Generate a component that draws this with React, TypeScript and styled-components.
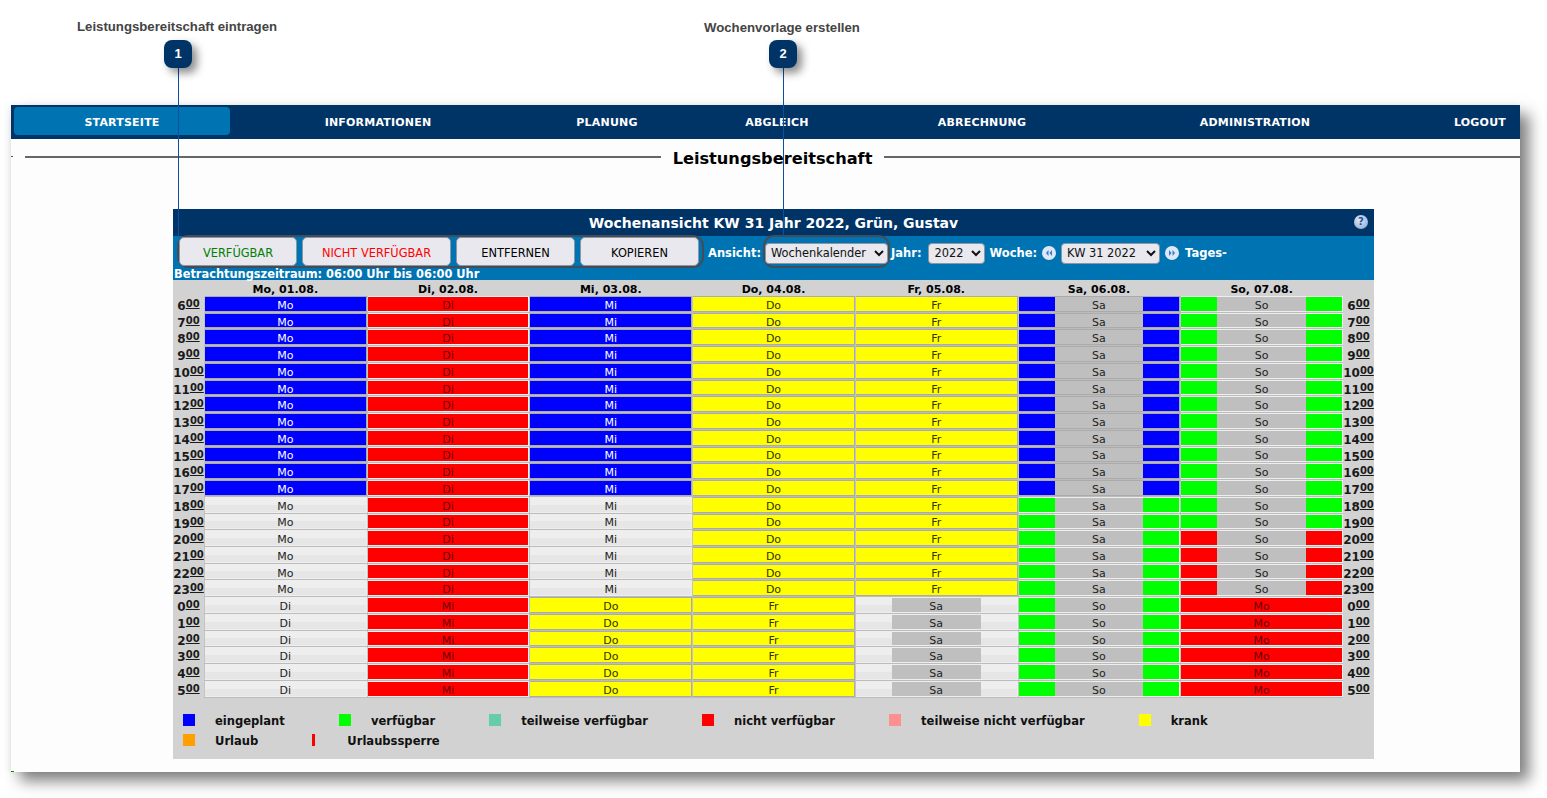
import React from "react";
import styled, { createGlobalStyle } from "styled-components";

const Global = createGlobalStyle`
  html, body { margin: 0; padding: 0; background: #fff; }
  body { font-family: "DejaVu Sans", Verdana, sans-serif; font-size: 11px; color: #000; }
`;

const NAVY = "#003366";
const BLUE = "#0074b3";

const Page = styled.div`
  position: relative;
  width: 1547px;
  height: 798px;
  padding: 105px 0 0 11px;
  box-sizing: border-box;
  overflow: hidden;
`;

const Win = styled.div`
  position: relative;
  width: 1509px;
  height: 667px;
  background: #fdfdfd;
  box-shadow: 9px 9px 14px rgba(0, 0, 0, 0.5), -2px 0 6px rgba(0, 0, 0, 0.06);
`;

const Nav = styled.nav`
  display: flex;
  height: 34px;
  background: ${NAVY};
  padding: 2px 0 2px 3px;
  box-sizing: border-box;
`;

const NavItem = styled.a<{ $w: number; $active?: boolean; $pad?: number }>`
  flex: 0 0 ${(p) => p.$w}px;
  display: flex;
  align-items: center;
  justify-content: center;
  padding: 2px 0 0 ${(p) => p.$pad ?? 0}px;
  box-sizing: border-box;
  margin-bottom: 2px;
  border-radius: 4px;
  background: ${(p) => (p.$active ? BLUE : "transparent")};
  color: #fff;
  font-weight: 700;
  font-size: 11px;
  letter-spacing: 0.2px;
`;

const TitleRow = styled.div`
  display: flex;
  align-items: center;
  height: 38px;
  padding-left: 14px;
`;

const Rule = styled.span`
  flex: 1;
  height: 2px;
  margin-bottom: 2px;
  background: #666;
`;

const PageTitle = styled.h1`
  margin: 0 12px;
  padding-top: 2px;
  font-size: 16.2px;
  font-weight: 700;
  line-height: 34px;
  white-space: nowrap;
`;

const Panel = styled.section`
  width: 1201px;
  height: 550px;
  margin: 32px 0 0 162px;
  background: #d2d2d2;
`;

const PanelHead = styled.header`
  position: relative;
  height: 27px;
  display: flex;
  align-items: center;
  justify-content: center;
  background: ${NAVY};
  color: #fff;
  font-size: 14px;
  font-weight: 700;
`;

const Help = styled.span`
  position: absolute;
  right: 6px;
  top: 6px;
  width: 14px;
  height: 14px;
  border-radius: 50%;
  background: radial-gradient(circle at 40% 35%, #dfe9f7, #7fa3d6);
  color: #2c4f8c;
  font-size: 10px;
  font-weight: 700;
  line-height: 14px;
  text-align: center;
`;

const Toolbar = styled.div`
  height: 45px;
  background: ${BLUE};
  color: #fff;
  box-sizing: border-box;
`;

const ToolRow = styled.div`
  display: flex;
  align-items: center;
  height: 33px;
  margin-top: -1px;
  padding-left: 4px;
  position: relative;
`;

const BtnGroup = styled.div`
  display: flex;
  gap: 5px;
  height: 33px;
  box-sizing: border-box;
  padding: 0 3px 0 0;
  border: 2px solid #444c58;
  border-radius: 11px;
  align-items: stretch;
`;

const Btn = styled.button<{ $w: number; $color: string }>`
  width: ${(p) => p.$w}px;
  padding: 2px 0 0;
  margin: 0;
  border: 1px solid #8c96a3;
  border-radius: 5px;
  background: #e8e8ee;
  color: ${(p) => p.$color};
  font: 400 11.4px "DejaVu Sans", Verdana, sans-serif;
`;

const Label = styled.span<{ $ml: number }>`
  margin: 3px 0 0 ${(p) => p.$ml}px;
  font-weight: 700;
  font-size: 11.5px;
  white-space: nowrap;
`;

const Ring = styled.div`
  display: flex;
  align-items: center;
  margin-left: 2px;
  height: 33px;
  box-sizing: border-box;
  padding: 3px 0 0;
  border: 2px solid #444c58;
  border-radius: 11px;
`;

const Select = styled.select<{ $w: number; $ml?: number; $mt?: number }>`
  width: ${(p) => p.$w}px;
  height: 21px;
  margin: ${(p) => p.$mt ?? 0}px 0 0 ${(p) => p.$ml ?? 0}px;
  padding: 0 0 0 1px;
  box-sizing: border-box;
  border: 1px solid #8c96a3;
  border-radius: 4px;
  background-color: #e8e8ee;
  color: #111;
  font: 400 11.4px "DejaVu Sans", Verdana, sans-serif;
`;

const Round = styled.span<{ $ml: number }>`
  display: inline-flex;
  margin: 3px 0 0 ${(p) => p.$ml}px;
  width: 14px;
  height: 14px;
`;

const Period = styled.div`
  padding-left: 1px;
  font-weight: 700;
  font-size: 11.4px;
  line-height: 13px;
`;

const Grid = styled.div`
  display: grid;
  grid-template-columns: 31px repeat(7, 1fr) 31px;
  grid-template-rows: 16px repeat(24, 16.74px);
`;

const DayHead = styled.div`
  font-weight: 700;
  font-size: 11px;
  line-height: 19px;
  text-align: center;
`;

const Hour = styled.div`
  display: flex;
  justify-content: center;
  padding-top: 1px;
  font-weight: 700;
  font-size: 12px;
  line-height: 18px;
  color: #1a1a1a;
`;

const Min = styled.span`
  font-size: 10px;
  line-height: 13px;
  text-decoration: underline;
`;

const Cell = styled.div<{ $sel?: boolean }>`
  box-sizing: border-box;
  padding: 1px 1px 2px;
  background: ${(p) => (p.$sel ? "#ababab" : "#eeeeee")};
  box-shadow: inset 0 -1px 0 #bcbcbc, inset 1px 0 0 #c4c4c4;
  display: flex;
  min-width: 0;
`;

const Fill = styled.div<{ $bg: string; $fg: string }>`
  flex: 1;
  display: flex;
  align-items: center;
  justify-content: center;
  padding-top: 3px;
  background: ${(p) => p.$bg};
  color: ${(p) => p.$fg};
  font-size: 11px;
  line-height: 9px;
`;

const Legend = styled.div`
  display: flex;
  flex-direction: column;
  gap: 8px;
  padding: 16px 0 0 10px;
`;

const LegendRow = styled.div`
  display: flex;
`;

const LegendItem = styled.div`
  display: flex;
  align-items: center;
  height: 12px;
  margin-right: 54px;
  font-weight: 700;
  font-size: 11.55px;
  color: #111;
  white-space: nowrap;
`;

const LegendText = styled.span`
  padding-top: 2px;
`;

const Swatch = styled.span<{ $c: string; $bar?: boolean }>`
  width: ${(p) => (p.$bar ? 3 : 12)}px;
  height: 12px;
  margin-right: ${(p) => (p.$bar ? 32 : 20)}px;
  background: ${(p) => p.$c};
`;

const Callout = styled.div<{ $x: number }>`
  position: absolute;
  left: ${(p) => p.$x}px;
  top: 40px;
  width: 28px;
  height: 28px;
  border-radius: 8px;
  background: ${NAVY};
  color: #fff;
  font: 700 13px "Liberation Sans", Arial, sans-serif;
  line-height: 28px;
  text-align: center;
  box-shadow: 5px 5px 9px rgba(0, 0, 0, 0.45);
  z-index: 3;
`;

const CalloutLine = styled.div<{ $x: number }>`
  position: absolute;
  left: ${(p) => p.$x}px;
  top: 68px;
  width: 1px;
  height: 169px;
  background: #0b4fa0;
  z-index: 2;
`;

const CalloutText = styled.div<{ $x: number; $y: number }>`
  position: absolute;
  left: ${(p) => p.$x}px;
  top: ${(p) => p.$y}px;
  font: 700 13.2px/16px "Liberation Sans", Arial, sans-serif;
  color: #444;
  white-space: nowrap;
`;

const Speck = styled.i<{ $bottom?: boolean }>`
  position: absolute;
  left: 0;
  ${(p) => (p.$bottom ? "bottom: 0; width: 3px; height: 1px; background: #0a8a0a;" : "top: 51px; width: 2px; height: 1px; background: #555;")}
`;

const RoundIcon = ({ dir }: { dir: "l" | "r" }) => (
  <svg width="14" height="14" viewBox="0 0 14 14">
    <circle cx="7" cy="7" r="7" fill="#dce8f6" />
    <path
      d={dir === "l" ? "M6.5 4 4 7l2.5 3zM10 4 7.5 7l2.5 3z" : "M7.5 4 10 7l-2.5 3zM4 4l2.5 3L4 10z"}
      fill="#3f78c4"
    />
  </svg>
);

type Kind = { bg: string; fg: string; sel: boolean };

const side = (c: string, mid = "#bfbfbf", rest = c) =>
  `linear-gradient(to right, ${c} 0 36px, ${mid} 36px calc(100% - 36px), ${rest} calc(100% - 36px))`;

const plain = "linear-gradient(to bottom, #eeeeee 0 50%, #e6e6e6 50%)";
const K = {
  blue: { bg: "#0000ff", fg: "#fff", sel: true },
  red: { bg: "#ff0000", fg: "#660000", sel: false },
  yellow: { bg: "#ffff00", fg: "#333300", sel: true },
  empty: { bg: plain, fg: "#222", sel: false },
  satBlue: { bg: side("#0000ff"), fg: "#222", sel: true },
  green: { bg: side("#00ff00"), fg: "#222", sel: false },
  redSide: { bg: side("#ff0000"), fg: "#222", sel: false },
  midGrey: {
    bg: `linear-gradient(to right, transparent 0 36px, #bfbfbf 36px calc(100% - 36px), transparent calc(100% - 36px)), ${plain}`,
    fg: "#222",
    sel: false,
  },
} satisfies Record<string, Kind>;

const hours = [6, 7, 8, 9, 10, 11, 12, 13, 14, 15, 16, 17, 18, 19, 20, 21, 22, 23, 0, 1, 2, 3, 4, 5];
const days = ["Mo, 01.08.", "Di, 02.08.", "Mi, 03.08.", "Do, 04.08.", "Fr, 05.08.", "Sa, 06.08.", "So, 07.08."];

const cellFor = (col: number, r: number): [Kind, string] => {
  switch (col) {
    case 0:
      return r < 12 ? [K.blue, "Mo"] : r < 18 ? [K.empty, "Mo"] : [K.empty, "Di"];
    case 1:
      return r < 18 ? [K.red, "Di"] : [K.red, "Mi"];
    case 2:
      return r < 12 ? [K.blue, "Mi"] : r < 18 ? [K.empty, "Mi"] : [K.yellow, "Do"];
    case 3:
      return r < 18 ? [K.yellow, "Do"] : [K.yellow, "Fr"];
    case 4:
      return r < 18 ? [K.yellow, "Fr"] : [K.midGrey, "Sa"];
    case 5:
      return r < 12 ? [K.satBlue, "Sa"] : r < 18 ? [K.green, "Sa"] : [K.green, "So"];
    default:
      return r < 14 ? [K.green, "So"] : r < 18 ? [K.redSide, "So"] : [K.red, "Mo"];
  }
};

const HourLabel = ({ h }: { h: number }) => (
  <Hour>
    {h}
    <Min>00</Min>
  </Hour>
);

const legendTop = [
  ["#0000ff", "eingeplant"],
  ["#00ff00", "verfügbar"],
  ["#66cdaa", "teilweise verfügbar"],
  ["#ff0000", "nicht verfügbar"],
  ["#ff9090", "teilweise nicht verfügbar"],
  ["#ffff00", "krank"],
];

const navItems: [string, number, number?][] = [
  ["STARTSEITE", 216],
  ["INFORMATIONEN", 296],
  ["PLANUNG", 162],
  ["ABGLEICH", 178],
  ["ABRECHNUNG", 232],
  ["ADMINISTRATION", 314],
  ["LOGOUT", 105, 31],
];

export default function App() {
  return (
    <Page>
      <Global />
      <CalloutText $x={77} $y={19}>Leistungsbereitschaft eintragen</CalloutText>
      <CalloutText $x={704} $y={20}>Wochenvorlage erstellen</CalloutText>
      <Callout $x={164}>1</Callout>
      <Callout $x={769}>2</Callout>
      <CalloutLine $x={178} />
      <CalloutLine $x={783} />
      <Win>
        <Speck />
        <Speck $bottom />
        <Nav>
          {navItems.map(([t, w, pad], i) => (
            <NavItem key={t} $w={w} $pad={pad} $active={i === 0}>
              {t}
            </NavItem>
          ))}
        </Nav>
        <TitleRow>
          <Rule />
          <PageTitle>Leistungsbereitschaft</PageTitle>
          <Rule />
        </TitleRow>
        <Panel>
          <PanelHead>
            Wochenansicht KW 31 Jahr 2022, Grün, Gustav
            <Help>?</Help>
          </PanelHead>
          <Toolbar>
            <ToolRow>
              <BtnGroup>
                <Btn $w={118} $color="#008000">VERFÜGBAR</Btn>
                <Btn $w={149} $color="#ff0000">NICHT VERFÜGBAR</Btn>
                <Btn $w={119} $color="#000">ENTFERNEN</Btn>
                <Btn $w={119} $color="#000">KOPIEREN</Btn>
              </BtnGroup>
              <Label $ml={4}>Ansicht:</Label>
              <Ring>
                <Select $w={123} defaultValue="w">
                  <option value="w">Wochenkalender</option>
                </Select>
              </Ring>
              <Label $ml={1}>Jahr:</Label>
              <Select $w={57} $ml={7} $mt={3} defaultValue="2022">
                <option>2022</option>
              </Select>
              <Label $ml={4}>Woche:</Label>
              <Round $ml={5}><RoundIcon dir="l" /></Round>
              <Select $w={99} $ml={5} $mt={3} defaultValue="KW 31 2022">
                <option>KW 31 2022</option>
              </Select>
              <Round $ml={5}><RoundIcon dir="r" /></Round>
              <Label $ml={6}>Tages-</Label>
            </ToolRow>
            <Period>Betrachtungszeitraum: 06:00 Uhr bis 06:00 Uhr</Period>
          </Toolbar>
          <Grid>
            <span />
            {days.map((d) => (
              <DayHead key={d}>{d}</DayHead>
            ))}
            <span />
            {hours.map((h, r) => (
              <React.Fragment key={h}>
                <HourLabel h={h} />
                {days.map((_, c) => {
                  const [k, t] = cellFor(c, r);
                  return (
                    <Cell key={c} $sel={k.sel}>
                      <Fill $bg={k.bg} $fg={k.fg}>{t}</Fill>
                    </Cell>
                  );
                })}
                <HourLabel h={h} />
              </React.Fragment>
            ))}
          </Grid>
          <Legend>
            <LegendRow>
              {legendTop.map(([c, t]) => (
                <LegendItem key={t}>
                  <Swatch $c={c} />
                  <LegendText>{t}</LegendText>
                </LegendItem>
              ))}
            </LegendRow>
            <LegendRow>
              <LegendItem>
                <Swatch $c="#ffa000" />
                <LegendText>Urlaub</LegendText>
              </LegendItem>
              <LegendItem>
                <Swatch $c="#ff0000" $bar />
                <LegendText>Urlaubssperre</LegendText>
              </LegendItem>
            </LegendRow>
          </Legend>
        </Panel>
      </Win>
    </Page>
  );
}
